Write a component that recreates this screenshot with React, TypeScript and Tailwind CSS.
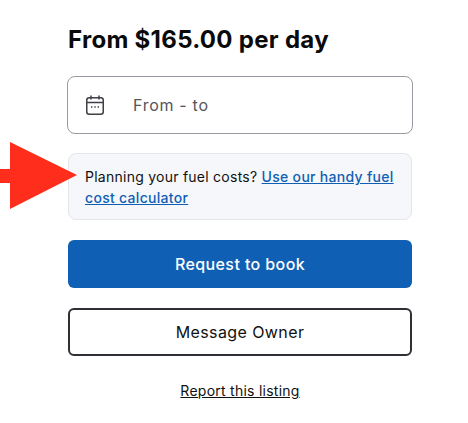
const font = "font-['Inter','Liberation_Sans',sans-serif]";

function RedArrow() {
  return (
    <svg className="absolute left-0 top-[142px]" width="78" height="68" viewBox="0 0 78 68">
      <polygon points="0,27 10,27 10,0 77,33 10,67 10,41 0,41" fill="#ff2d1c" />
    </svg>
  );
}

function CalendarIcon() {
  return (
    <svg width="18" height="20" viewBox="0 0 18 20" fill="none" stroke="#3f3f46" strokeWidth="1.5">
      <rect x="0.75" y="2.75" width="16.5" height="16.5" rx="2.5" />
      <path d="M0.75 7.5h16.5M5 0.5v4M13 0.5v4" />
      <path d="M5 12h1.4M8.3 12h1.4M11.6 12h1.4" />
    </svg>
  );
}

export default function App() {
  return (
    <div className={`relative h-[423px] w-[468px] overflow-hidden bg-white ${font}`}>
      <div className="flex w-[468px] flex-col pl-[68px] pr-[56px] pt-[23px]">
        <h1 className="h-[34px] text-[24px] font-bold leading-[34px] tracking-[0.3px] text-[#0a0a0a]">From $165.00 per day</h1>

        <div className="ml-[-1px] mt-[19px] flex h-[58px] w-[346px] items-center rounded-[8px] border border-[#9a9aa3] pl-[18px]">
          <CalendarIcon />
          <span className="ml-[29px] text-[16px] tracking-[0.7px] text-[#55555c]">From - to</span>
        </div>

        <div className="mt-[19px] h-[67px] w-[344px] rounded-[8px] border border-[#e4e5ea] bg-[#f6f7fa] px-[16px] pt-[12px] text-[14px] leading-[21px] tracking-[0.25px] text-[#111111]">
          Planning your fuel costs?{' '}
          <a className="font-medium tracking-[0.3px] text-[#0f5fb4] underline">Use our handy fuel cost calculator</a>
        </div>

        <button className="mt-[20px] h-[48px] w-[344px] rounded-[6px] bg-[#0f5fb4] text-[16px] font-medium tracking-[0.4px] text-white">Request to book</button>

        <button className="mt-[20px] h-[48px] w-[344px] rounded-[6px] border-2 border-[#2e3035] bg-white text-[16px] tracking-[0.4px] text-[#111111]">Message Owner</button>

        <a className="mt-[24px] w-[344px] text-center text-[14px] leading-[21px] tracking-[0.25px] text-[#111111] underline">Report this listing</a>
      </div>
      <RedArrow />
    </div>
  );
}
